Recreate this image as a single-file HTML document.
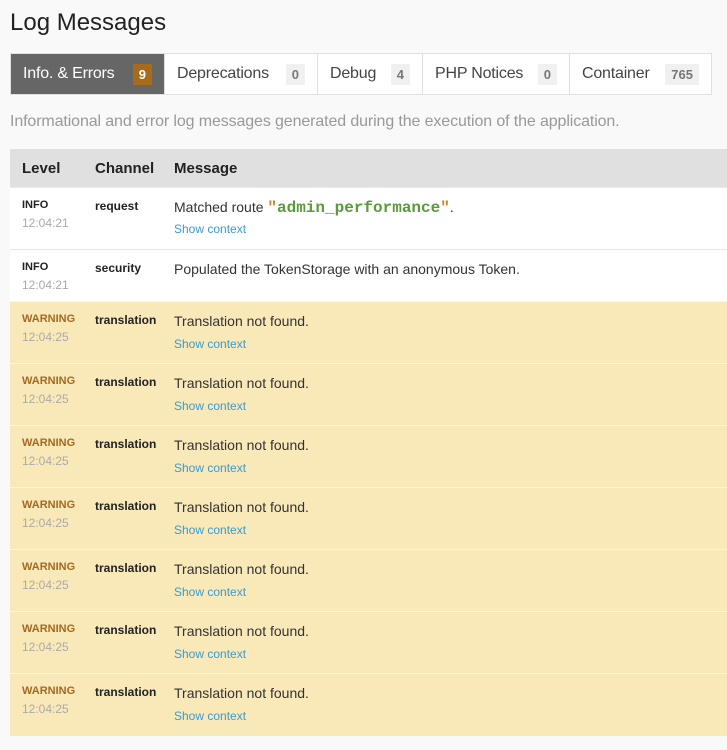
<!DOCTYPE html>
<html><head><meta charset="utf-8"><style>
body{margin:0;background:#f9f9f9;font-family:"Liberation Sans",sans-serif;color:#222;width:727px;height:750px;overflow:hidden;position:relative}
h2{position:absolute;left:10px;top:9px;margin:0;font-size:24px;font-weight:normal;color:#222}
.tabs{position:absolute;left:10px;top:53px;height:42px;display:flex;border:1px solid #e0e0e0;box-sizing:border-box;background:#fff}
.tab{height:40px;display:flex;align-items:center;padding:0 12px;font-size:16px;color:#444;border-right:1px solid #e0e0e0;box-sizing:border-box;white-space:nowrap;letter-spacing:-0.2px}
.tab:last-child{border-right:0}
.tab b{font-weight:bold;font-size:13px;background:#f0f0f0;color:#777;padding:3px 6px;margin-left:auto;letter-spacing:0}
.tab.active{background:#666;color:#fff}
.tab.active b{background:#a86b1c;color:#fff}
.desc{position:absolute;left:10px;top:113px;font-size:16px;color:#999;letter-spacing:-0.12px;white-space:nowrap}
table{position:absolute;left:10px;top:149px;width:740px;border-collapse:collapse;table-layout:fixed}
th{background:#e0e0e0;height:38px;text-align:left;font-size:15px;padding:0 0 0 12px;font-weight:bold;color:#222}
td{vertical-align:top;padding:11px 0 0 12px;font-size:14px;border-top:1px solid #e8e8e8;box-sizing:border-box;overflow:hidden;white-space:nowrap}
tr.i td{background:#fff}
tr.w td{background:#f9e8b8;border-top:1px solid #fff5dc}
.lv{font-size:11px;font-weight:bold}
.lv span{display:block;font-weight:normal;color:#aaa;font-size:12px;margin-top:5px}
tr.w .lv{color:#a46a20}
.ch{font-size:12px;font-weight:bold}
td.m{color:#333}
a{color:#3a9bd0;font-size:12px;text-decoration:none;display:block;margin-top:8px}
tr.f a{margin-top:5px}
code{font-family:"Liberation Mono",monospace;font-weight:bold;color:#5a9a3c;font-size:16px}
.qt{color:#c8852a;font-weight:bold;font-family:"Liberation Mono",monospace;font-size:16px}
</style></head><body>
<h2>Log Messages</h2>
<div class="tabs">
<div class="tab active" style="width:154px">Info. &amp; Errors <b>9</b></div>
<div class="tab" style="width:153px">Deprecations <b>0</b></div>
<div class="tab" style="width:105px">Debug <b>4</b></div>
<div class="tab" style="width:147px">PHP Notices <b>0</b></div>
<div class="tab" style="width:141px">Container <b>765</b></div>
</div>
<div class="desc">Informational and error log messages generated during the execution of the application.</div>
<table>
<colgroup><col style="width:73px"><col style="width:79px"><col></colgroup>
<tr><th>Level</th><th>Channel</th><th>Message</th></tr>
<tr class="i f" style="height:62px"><td class="lv">INFO<span>12:04:21</span></td><td class="ch">request</td><td class="m">Matched route <span class="qt">"</span><code>admin_performance</code><span class="qt">"</span>.<a>Show context</a></td></tr>
<tr class="i" style="height:52px"><td class="lv">INFO<span>12:04:21</span></td><td class="ch">security</td><td class="m">Populated the TokenStorage with an anonymous Token.</td></tr>
<tr class="w" style="height:62px"><td class="lv">WARNING<span>12:04:25</span></td><td class="ch">translation</td><td class="m">Translation not found.<a>Show context</a></td></tr>
<tr class="w" style="height:62px"><td class="lv">WARNING<span>12:04:25</span></td><td class="ch">translation</td><td class="m">Translation not found.<a>Show context</a></td></tr>
<tr class="w" style="height:62px"><td class="lv">WARNING<span>12:04:25</span></td><td class="ch">translation</td><td class="m">Translation not found.<a>Show context</a></td></tr>
<tr class="w" style="height:62px"><td class="lv">WARNING<span>12:04:25</span></td><td class="ch">translation</td><td class="m">Translation not found.<a>Show context</a></td></tr>
<tr class="w" style="height:62px"><td class="lv">WARNING<span>12:04:25</span></td><td class="ch">translation</td><td class="m">Translation not found.<a>Show context</a></td></tr>
<tr class="w" style="height:62px"><td class="lv">WARNING<span>12:04:25</span></td><td class="ch">translation</td><td class="m">Translation not found.<a>Show context</a></td></tr>
<tr class="w" style="height:62px"><td class="lv">WARNING<span>12:04:25</span></td><td class="ch">translation</td><td class="m">Translation not found.<a>Show context</a></td></tr>
</table>
</body></html>
